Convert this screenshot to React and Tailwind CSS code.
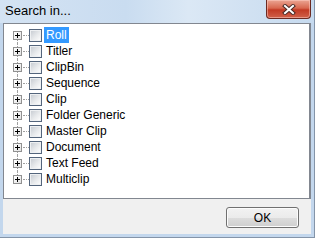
const items = [
  "Roll",
  "Titler",
  "ClipBin",
  "Sequence",
  "Clip",
  "Folder Generic",
  "Master Clip",
  "Document",
  "Text Feed",
  "Multiclip",
];

function PlusBox() {
  return (
    <span className="relative z-10 flex h-[9px] w-[9px] items-center justify-center border border-[#919191] bg-[linear-gradient(135deg,#ffffff,#e3e3e3)]">
      <span className="absolute left-[1px] top-[3px] h-[1px] w-[5px] bg-black" />
      <span className="absolute left-[3px] top-[1px] h-[5px] w-[1px] bg-black" />
    </span>
  );
}

function TreeRow({ label, index, count, selected }) {
  const first = index === 0;
  const last = index === count - 1;
  return (
    <div className="flex h-[16px] items-center">
      <div className="relative flex h-[16px] w-[9px] items-center">
        <span
          className={
            "absolute left-[4px] w-0 border-l border-dotted border-[#a0a0a0] " +
            (first ? "top-[8px] bottom-0" : last ? "top-0 bottom-[8px]" : "top-0 bottom-0")
          }
        />
        <PlusBox />
      </div>
      <span className="ml-[1px] h-0 w-[6px] border-t border-dotted border-[#a0a0a0]" />
      <span className="h-[13px] w-[13px] border border-[#54657c] bg-[linear-gradient(135deg,#c3c8cf,#e8eaec_55%,#ffffff)] shadow-[inset_0_0_0_1px_#eef0f2]" />
      <span
        className={
          "ml-[2px] flex h-[16px] items-center px-[2px] text-[12px] leading-none " +
          (selected ? "bg-[#3399ff] text-white" : "text-black")
        }
      >
        {label}
      </span>
    </div>
  );
}

export default function App() {
  return (
    <div
      className="flex h-[238px] w-[315px] flex-col overflow-hidden border-b border-r border-[#8494a8] bg-[#c3d7ed]"
      style={{ fontFamily: '"Liberation Sans", Arial, sans-serif' }}
    >
      <div className="flex h-[23px] shrink-0 items-start justify-between bg-[linear-gradient(90deg,#d4e3f3,#c9dcf0_40%,#dbe8f5_60%,#c6daef)]">
        <span className="pl-[5px] pt-[4px] text-[13px] leading-none text-black">Search in...</span>
        <div className="mr-[3px] flex h-[19px] w-[45px] items-center justify-center rounded-b-[4px] border border-t-0 border-[#6b2a22] bg-[linear-gradient(180deg,#eba593,#d8684f_45%,#c23a24_55%,#d0614a)] shadow-[inset_0_0_0_1px_rgba(255,210,200,0.5)]">
          <svg width="14" height="11" viewBox="0 0 14 11">
            <path d="M3 2 L11 9 M11 2 L3 9" stroke="#4a2a26" strokeWidth="4" strokeLinecap="square" />
            <path d="M3 2 L11 9 M11 2 L3 9" stroke="#ffffff" strokeWidth="2" strokeLinecap="square" />
          </svg>
        </div>
      </div>
      <div className="flex flex-1 flex-col px-[3px] pb-[3px]">
        <div className="flex flex-1 flex-col bg-[#f0f0f0]">
          <div className="h-[176px] border border-r-2 border-[#828790] bg-white pl-[9px] pt-[3px]">
            {items.map((label, i) => (
              <TreeRow key={label} label={label} index={i} count={items.length} selected={i === 0} />
            ))}
          </div>
          <div className="flex justify-end pr-[12px] pt-[8px]">
            <button className="flex h-[21px] w-[73px] items-center justify-center rounded-[3px] border border-[#707070] bg-[linear-gradient(180deg,#f2f2f2,#ebebeb_50%,#dddddd_50%,#cfcfcf)] text-[12px] text-black shadow-[inset_0_0_0_1px_#fcfcfc]">
              OK
            </button>
          </div>
        </div>
      </div>
    </div>
  );
}
